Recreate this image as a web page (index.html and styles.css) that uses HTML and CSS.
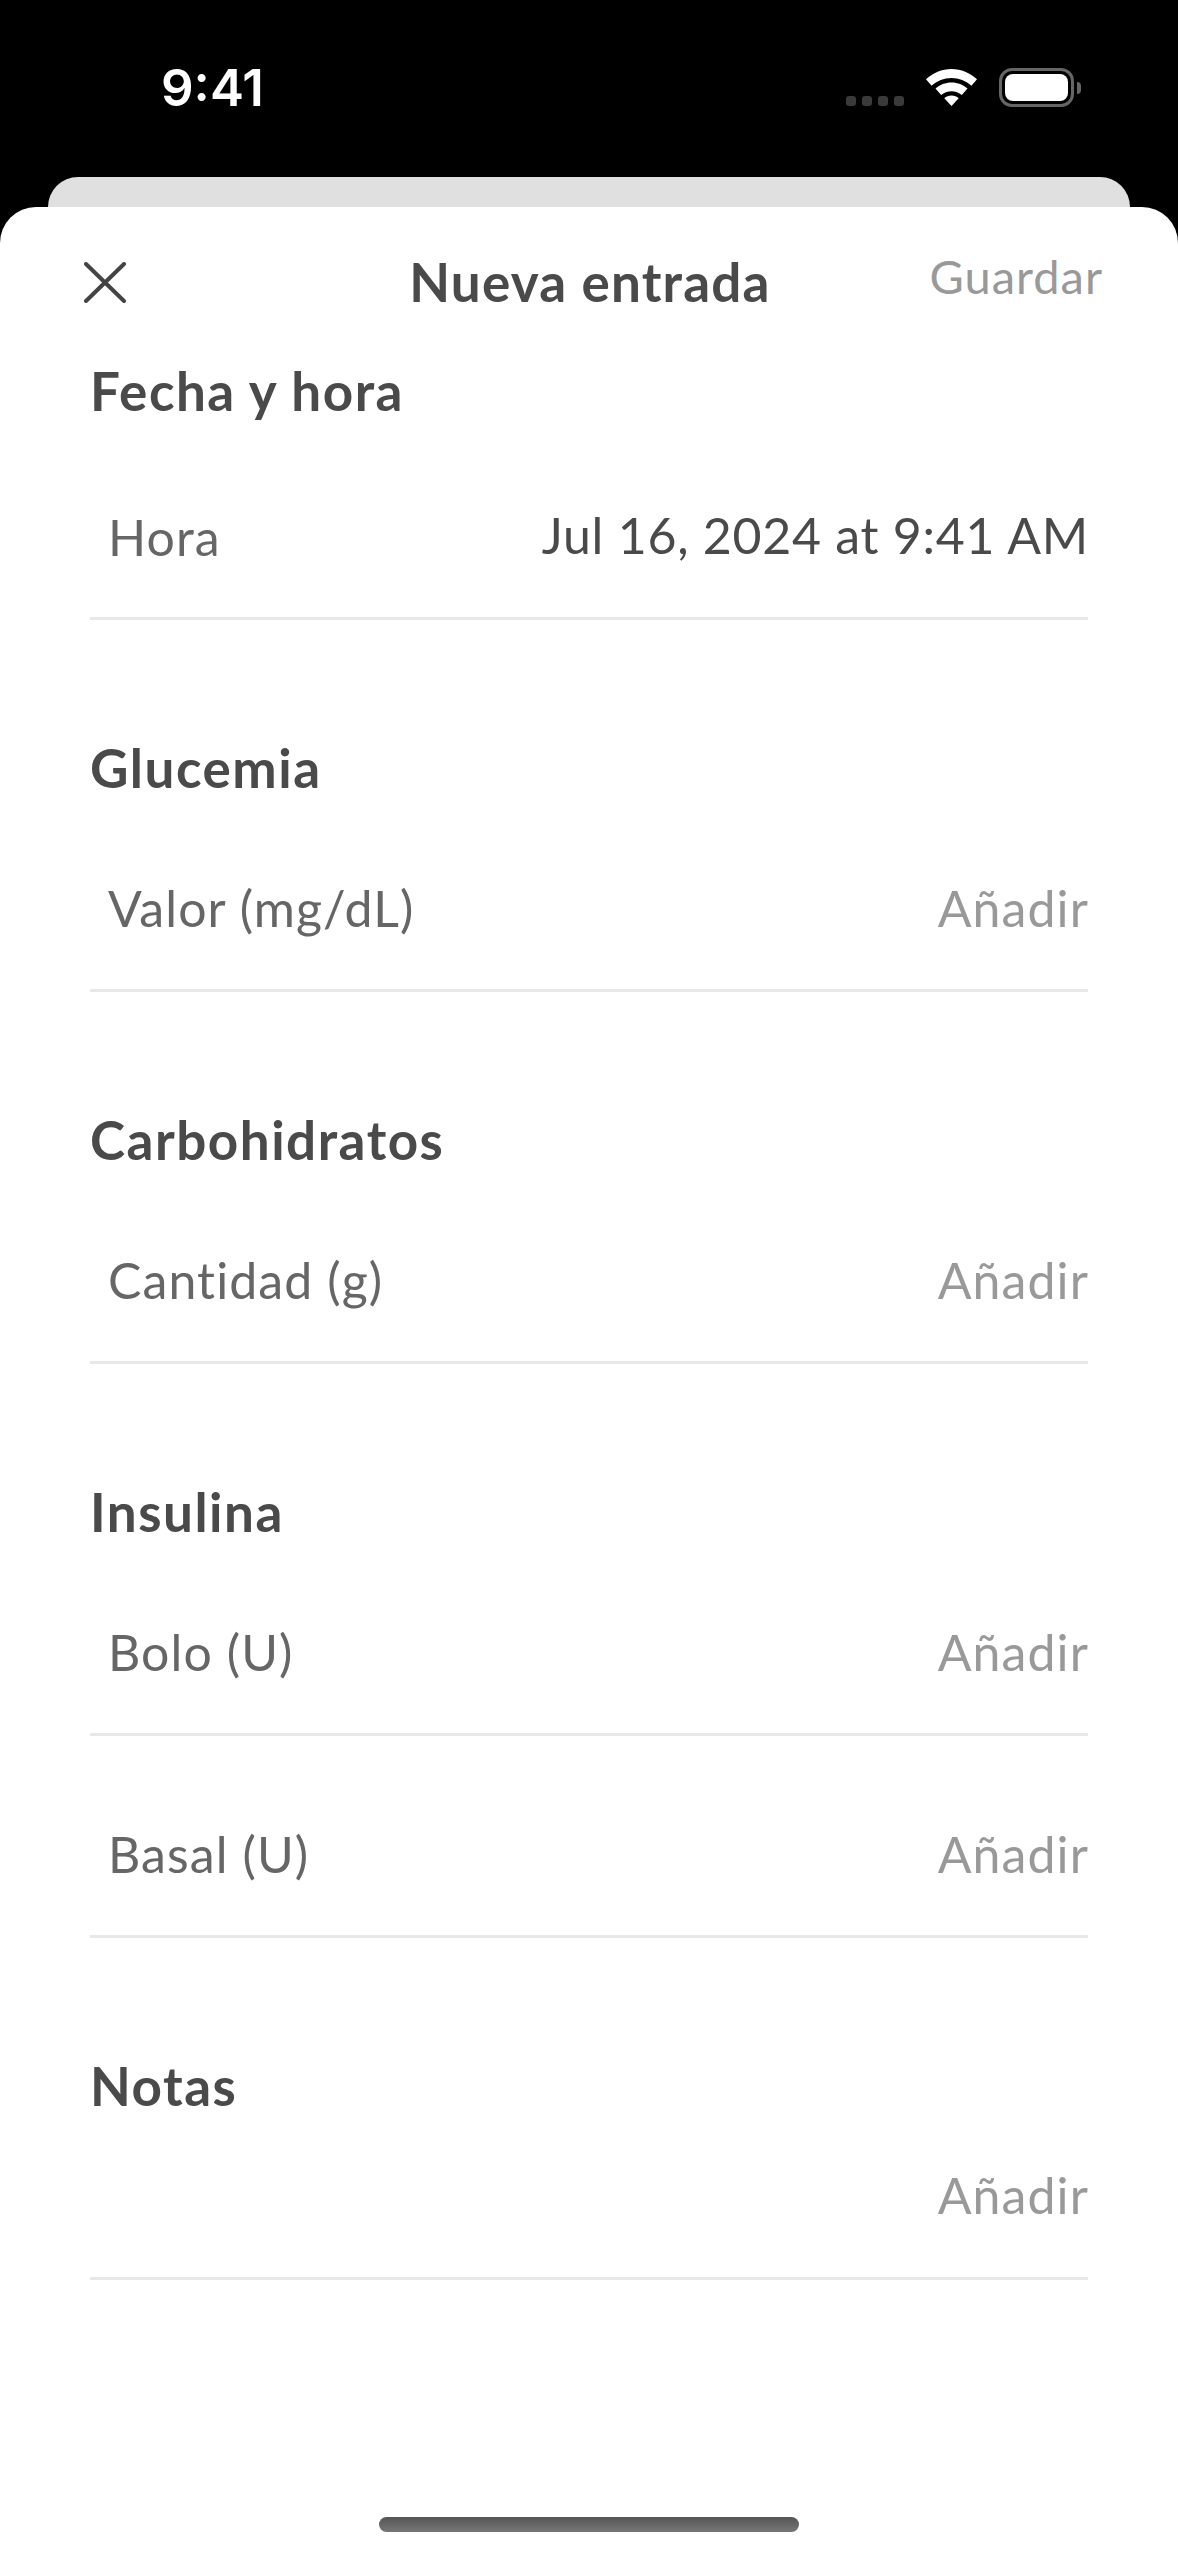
FILE: index.html
```html
<!DOCTYPE html>
<html lang="es">
<head>
  <meta charset="UTF-8">
  <title>Nueva entrada</title>
  <link rel="stylesheet" href="styles.css">
</head>
<body>
  <div class="status-bar">
    <span class="time">9:41</span>
    <div class="status-icons">
      <div class="signal"><span></span><span></span><span></span><span></span></div>
      <svg class="wifi" viewBox="0 0 51 37" width="51" height="37">
        <path d="M25.5 0C15.8 0 7 3.8 0 10.2l5.6 6.6C11 12 18 9 25.5 9s14.500 3 19.900 7.800L51 10.200C44 3.800 35.200 0 25.500 0z" fill="#fff"/>
        <path d="M25.500 13.500c-6.200 0-11.800 2.300-16 6.100l5.700 6.500c2.800-2.400 6.400-3.800 10.300-3.800s7.500 1.400 10.300 3.800l5.700-6.500c-4.200-3.800-9.800-6.100-16-6.100z" fill="#fff"/>
        <path d="M25.500 26.500c-2.800 0-5.300 1-7.200 2.700l7.200 7.800 7.200-7.800c-1.900-1.700-4.400-2.700-7.200-2.700z" fill="#fff"/>
      </svg>
      <div class="battery">
        <div class="battery-body"><div class="battery-level"></div></div>
        <div class="battery-nub"></div>
      </div>
    </div>
  </div>

  <div class="back-card"></div>

  <div class="sheet">
    <div class="nav">
      <svg class="close" viewBox="0 0 42 41" width="42" height="41">
        <path d="M2 2L40 39M40 2L2 39" stroke="#444" stroke-width="4" stroke-linecap="round" fill="none"/>
      </svg>
      <div class="nav-title">Nueva entrada</div>
      <div class="nav-action">Guardar</div>
    </div>

    <div class="section section-first">
      <h2>Fecha y hora</h2>
      <div class="row row-first">
        <span class="label">Hora</span>
        <span class="value">Jul 16, 2024 at 9:41 AM</span>
      </div>
    </div>

    <div class="section">
      <h2>Glucemia</h2>
      <div class="row">
        <span class="label">Valor (mg/dL)</span>
        <span class="add">Añadir</span>
      </div>
    </div>

    <div class="section">
      <h2>Carbohidratos</h2>
      <div class="row">
        <span class="label">Cantidad (g)</span>
        <span class="add">Añadir</span>
      </div>
    </div>

    <div class="section">
      <h2>Insulina</h2>
      <div class="row">
        <span class="label">Bolo (U)</span>
        <span class="add">Añadir</span>
      </div>
      <div class="row">
        <span class="label">Basal (U)</span>
        <span class="add">Añadir</span>
      </div>
    </div>

    <div class="section">
      <h2>Notas</h2>
      <div class="row row-notes">
        <span class="add">Añadir</span>
      </div>
    </div>

    <div class="home-bar"></div>
  </div>
</body>
</html>
```

FILE: styles.css
```css
* {
  box-sizing: border-box;
}

html, body {
  margin: 0;
  padding: 0;
}

body {
  width: 1178px;
  height: 2556px;
  background: #000;
  font-family: "Lato", "Noto Sans", sans-serif;
  display: flex;
  flex-direction: column;
  overflow: hidden;
}

.status-bar {
  height: 177px;
  display: flex;
  justify-content: space-between;
  padding: 60px 97px 0 161px;
}

.time {
  font-family: "Inter", sans-serif;
  font-weight: 600;
  font-size: 51px;
  line-height: 56px;
  color: #fff;
}

.status-icons {
  display: flex;
  align-items: flex-start;
  padding-top: 8px;
}

.signal {
  display: flex;
  gap: 6px;
  margin-top: 28px;
  margin-right: 22px;
}

.signal span {
  width: 10px;
  height: 10px;
  border-radius: 3px;
  background: #3a3a3a;
}

.wifi {
  margin-right: 22px;
  margin-top: 1px;
}

.battery {
  display: flex;
  align-items: center;
}

.battery-body {
  width: 75px;
  height: 39px;
  border: 3.5px solid #666;
  border-radius: 13px;
  padding: 3px;
}

.battery-level {
  width: 100%;
  height: 100%;
  background: #fff;
  border-radius: 8px;
}

.battery-nub {
  width: 4px;
  height: 12px;
  margin-left: 3px;
  background: #666;
  border-radius: 0 4px 4px 0;
}

.back-card {
  height: 30px;
  margin: 0 48px;
  background: #e0e0e0;
  border-radius: 32px 32px 0 0;
}

.sheet {
  flex: 1;
  background: #fff;
  border-radius: 36px 36px 0 0;
  padding: 0 90px;
  display: flex;
  flex-direction: column;
}

.nav {
  display: grid;
  grid-template-columns: 1fr auto 1fr;
  align-items: center;
  height: 150px;
  margin: 0 -15px 0 -7px;
}

.close {
  margin-left: 1px;
}

.nav-title {
  font-size: 53px;
  font-weight: 700;
  letter-spacing: 1.2px;
  color: #4a4a4a;
  line-height: 60px;
  margin-right: 6px;
}

.nav-action {
  justify-self: end;
  font-size: 47px;
  letter-spacing: 1px;
  color: #999;
  line-height: 60px;
  margin-top: -12px;
}

.section {
  margin-top: 130px;
}

.section-first {
  margin-top: 16px;
}

h2 {
  margin: 0;
  padding-bottom: 4px;
  font-size: 53px;
  font-weight: 700;
  letter-spacing: 1.5px;
  color: #4a4a4a;
  line-height: 36px;
}

.row {
  height: 202px;
  padding: 96px 0 0 18px;
  display: flex;
  justify-content: space-between;
  align-items: flex-start;
  border-bottom: 3px solid #e8e8e8;
  font-size: 50px;
  letter-spacing: 1.1px;
  line-height: 44px;
}

.row-first {
  height: 207px;
  padding-top: 102px;
}

.row-notes {
  height: 172px;
  padding-top: 65px;
  justify-content: flex-end;
}

.label {
  color: #666;
}

.value {
  color: #4a4a4a;
  letter-spacing: 0.75px;
  margin-top: -2px;
  margin-right: -1px;
}

.add {
  color: #999;
  margin-right: -1px;
}

.home-bar {
  width: 420px;
  height: 15px;
  margin: auto auto 24px;
  border-radius: 8px;
  background: linear-gradient(#555, #777);
}
```
